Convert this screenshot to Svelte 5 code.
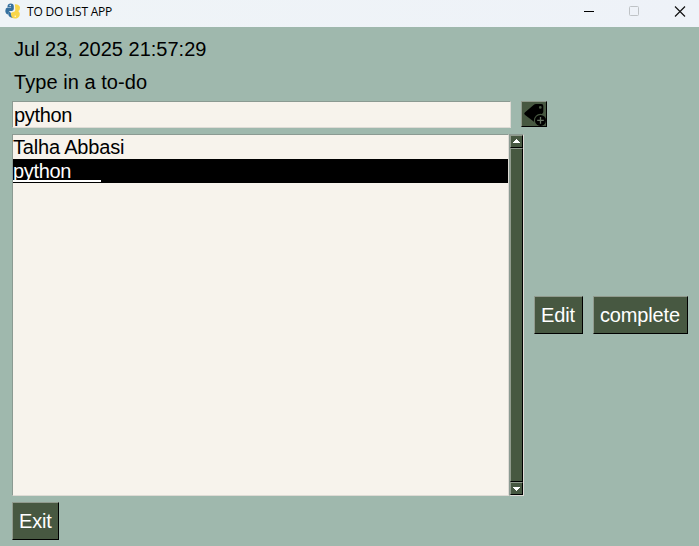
<script>
  let now = 'Jul 23, 2025 21:57:29';
  let entry = 'python';
  let todos = ['Talha Abbasi', 'python'];
  let selected = 1;
</script>

<div class="window">
  <header>
    <svg class="logo" width="16" height="17" viewBox="0 0 16 17">
      <path fill="#35709f" d="M2.5 3.2Q2.8 .5 5.6 .5Q8.9 .7 8.8 3.6V6.1Q8.6 7.8 7 8H5.2Q3.6 8.2 3.5 10V11.6Q.4 11 .3 8Q.3 5 2.4 4.6H6.1V4H2.5Z" />
      <path fill="#f8d64b" d="M9.9 1.3Q14.8 1.6 15 4.6Q15.2 7 13.3 8Q15.4 9.7 14.7 12.2Q13.6 15.6 9.8 15.6Q6 15.4 5.6 12.2Q5.5 9.5 8.2 9.1Q10.2 8.8 10.3 7Z" />
      <path fill="#35709f" d="M3.4 8.4Q6.4 9 5.9 11.5Q6.1 13.7 7.8 14.8Q4.4 14.7 3.4 12Z" />
      <circle cx="5.2" cy="2.5" r=".7" fill="#fff" />
      <circle cx="10.2" cy="13.2" r=".7" fill="#fff" />
    </svg>
    <span class="title">TO DO LIST APP</span>
    <svg class="controls" width="115" height="27" viewBox="0 0 115 27">
      <path d="M0 11.5H10" stroke="#000" />
      <rect x="45.5" y="6.5" width="9" height="9" rx="1" fill="none" stroke="#bfc3c6" />
      <path d="M91 6.5L101 16.5M101 6.5L91 16.5" stroke="#111" stroke-width="1.15" />
    </svg>
  </header>

  <main>
    <div class="label clock">{now}</div>
    <div class="label prompt">Type in a to-do</div>
    <div class="entry-row">
      <div class="entry">{entry}</div>
      <div class="add">
        <svg width="24" height="24" viewBox="0 0 24 24">
          <path fill="#000" fill-rule="evenodd" d="M2.8 10.6L11.6 3Q12.6 2.1 14 2.1H19.4Q21.3 2.1 21.3 4V9.5Q21.3 10.5 20.6 11.3L14 19Q12.6 20.3 11.3 19.2L2.8 12.8Q1.6 11.7 2.8 10.6ZM18.3 4A1.4 1.4 0 1 0 18.3 6.8A1.4 1.4 0 1 0 18.3 4Z" />
          <circle cx="18.5" cy="18.4" r="6.6" fill="#475841" />
          <circle cx="18.5" cy="18.4" r="5.5" fill="#000" />
          <path d="M18.5 15.1V21.7M15.2 18.4H21.8" stroke="#687564" stroke-width="1.3" />
        </svg>
      </div>
    </div>
    <div class="body-row">
      <div class="list">
        {#each todos as todo, i}
          <div class="item" class:selected={i === selected}><span>{todo}</span></div>
        {/each}
      </div>
      <div class="scrollbar">
        <div class="arrow"><svg width="9" height="9" viewBox="0 0 9 9"><path fill="#fff" d="M4 2H5V3H6V4H7V5H8V6H1V5H2V4H3V3H4Z" /></svg></div>
        <div class="thumb"></div>
        <div class="arrow"><svg width="9" height="9" viewBox="0 0 9 9"><path fill="#fff" d="M1 3H8V4H7V5H6V6H5V7H4V6H3V5H2V4H1Z" /></svg></div>
      </div>
      <div class="button edit">Edit</div>
      <div class="button complete">complete</div>
    </div>
    <div class="button exit">Exit</div>
  </main>
</div>

<style>
  .window {
    width: 699px;
    height: 546px;
    overflow: hidden;
    background: #9fb8ad;
    color: #000;
    font: 20px/24px "Liberation Sans", Arial, sans-serif;
  }
  .window * { box-sizing: border-box; }
  svg { display: block; }
  header {
    display: flex;
    height: 27px;
    padding-left: 5px;
    background: linear-gradient(90deg, #eff4f7, #eef2f8);
  }
  .logo { margin-top: 3px; }
  .title {
    margin-left: 6px;
    font: 12px/24px "Open Sans", "Noto Sans", sans-serif;
    letter-spacing: -0.22px;
    white-space: nowrap;
  }
  .controls { margin-left: auto; }
  main { padding: 10px 11px 0 12px; }
  .label { padding-left: 2px; }
  .prompt { margin-top: 9px; letter-spacing: 0.05px; }
  .entry-row { display: flex; gap: 10px; margin-top: 7px; }
  .entry {
    width: 499px;
    height: 27px;
    padding: 1px;
    background: #f7f3ec;
    border: 1px solid;
    border-color: #8b9a92 #dedbd5 #dedbd5 #8b9a92;
    letter-spacing: -0.35px;
  }
  .add {
    width: 26px;
    height: 26px;
    background: #475841;
    border: 1px solid;
    border-color: #919b8e #000 #000 #919b8e;
  }
  .body-row { display: flex; align-items: center; margin-top: 6px; }
  .list {
    width: 497px;
    height: 362px;
    background: #f7f3ec;
    border: 1px solid;
    border-color: #8b9a92 #dedbd5 #dedbd5 #8b9a92;
  }
  .item { height: 24px; letter-spacing: -0.18px; }
  .selected { background: #000; color: #fff; letter-spacing: -0.35px; }
  .selected span {
    display: block;
    width: 88px;
    height: 23px;
    border-bottom: 2px solid #fff;
  }
  .scrollbar {
    display: flex;
    flex-direction: column;
    width: 15px;
    height: 362px;
    border: 1px solid;
    border-color: #8b9a92 #dedbd5 #dedbd5 #8b9a92;
  }
  .arrow {
    display: flex;
    justify-content: center;
    align-items: center;
    height: 13px;
  }
  .arrow, .thumb {
    background: #475841;
    border: 1px solid;
    border-color: #919b8e #000 #000 #919b8e;
  }
  .thumb { flex: 1; }
  .button {
    height: 38px;
    padding-left: 6px;
    background: #475841;
    border: 1px solid;
    border-color: #919b8e #000 #000 #919b8e;
    color: #fff;
    line-height: 36px;
    letter-spacing: -0.15px;
    white-space: nowrap;
  }
  .edit { width: 49px; margin-left: 10px; }
  .complete { width: 95px; margin-left: 10px; }
  .exit { width: 47px; margin-top: 6px; }
</style>
